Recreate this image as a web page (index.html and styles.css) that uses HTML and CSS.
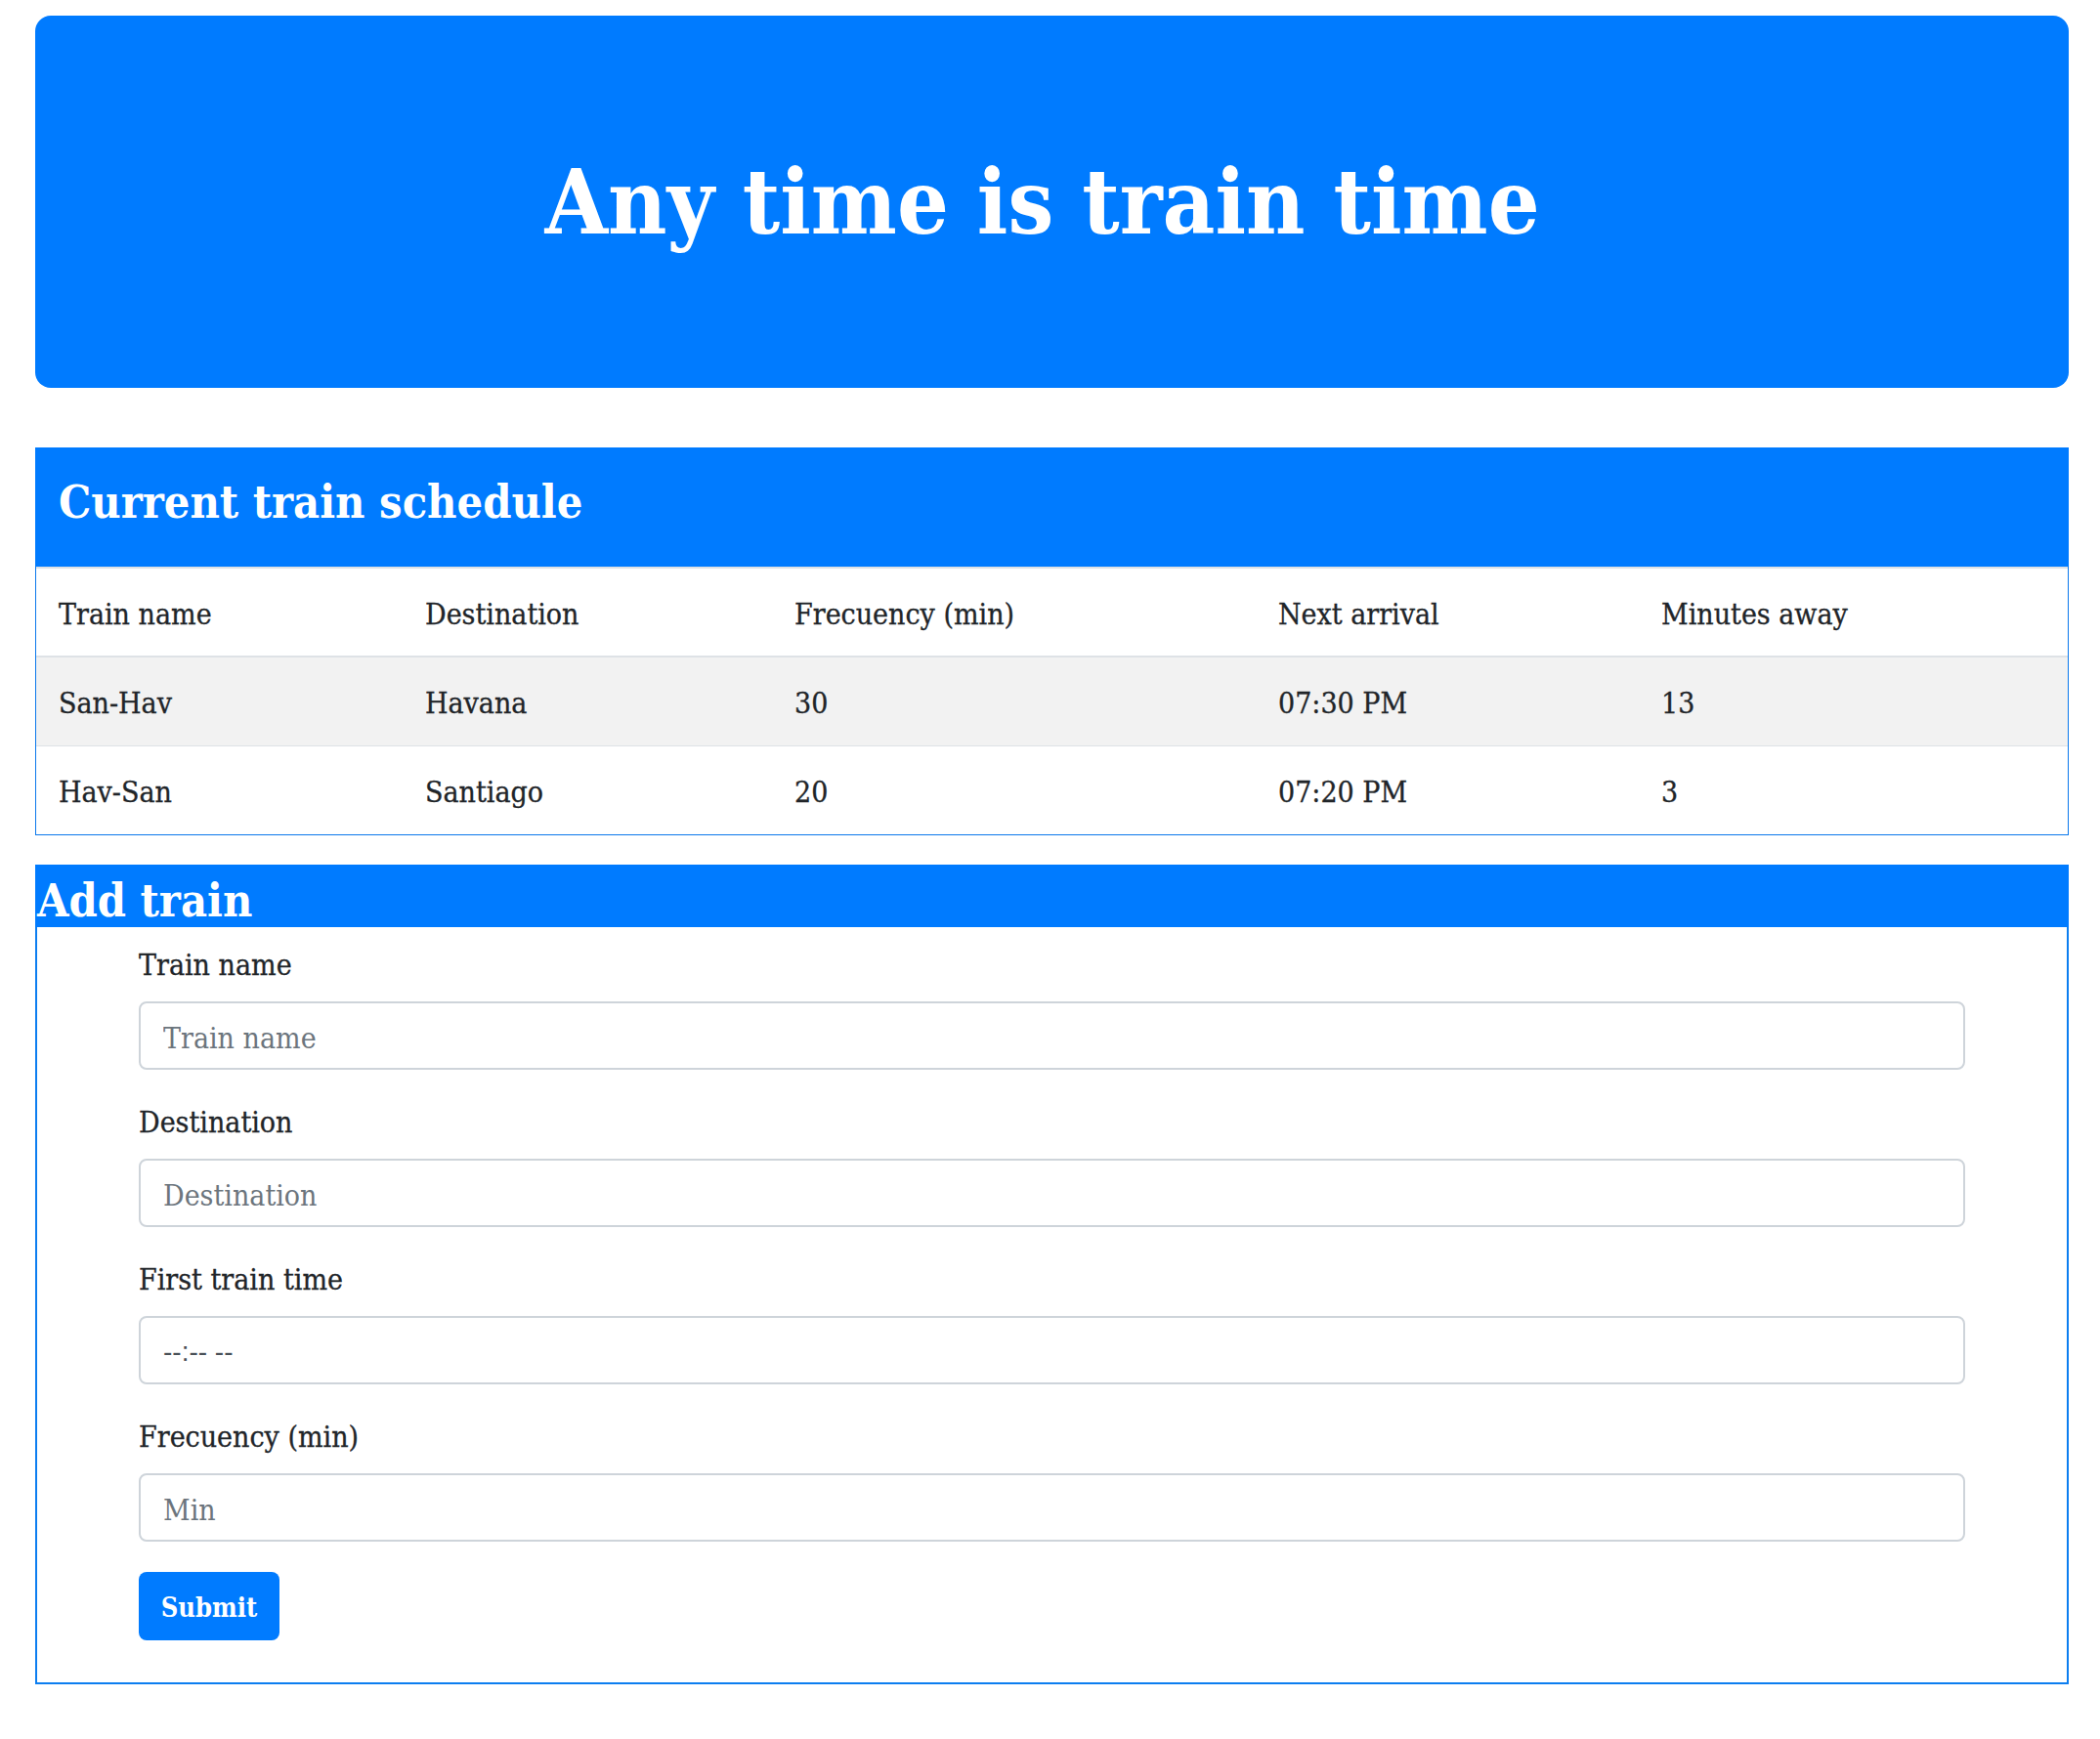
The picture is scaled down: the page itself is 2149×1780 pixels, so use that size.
FILE: index.html
```html
<!DOCTYPE html>
<html lang="en">
<head>
<meta charset="utf-8">
<title>Train Scheduler</title>
<link rel="stylesheet" href="styles.css">
</head>
<body>
<div class="page">
  <header class="jumbotron">
    <h1 class="title">Any time is train time</h1>
  </header>

  <section class="schedule">
    <h3 class="schedule-head">Current train schedule</h3>
    <table class="trains">
      <colgroup>
        <col class="c1"><col class="c2"><col class="c3"><col class="c4"><col class="c5">
      </colgroup>
      <thead>
        <tr><th>Train name</th><th>Destination</th><th>Frecuency (min)</th><th>Next arrival</th><th>Minutes away</th></tr>
      </thead>
      <tbody>
        <tr class="odd"><td>San-Hav</td><td>Havana</td><td>30</td><td>07:30 PM</td><td>13</td></tr>
        <tr><td>Hav-San</td><td>Santiago</td><td>20</td><td>07:20 PM</td><td>3</td></tr>
      </tbody>
    </table>
  </section>

  <section class="add">
    <h3 class="add-head">Add train</h3>
    <form class="add-form">
      <div class="group">
        <label class="lbl" for="name">Train name</label>
        <input class="field" id="name" type="text" placeholder="Train name">
      </div>
      <div class="group">
        <label class="lbl" for="dest">Destination</label>
        <input class="field" id="dest" type="text" placeholder="Destination">
      </div>
      <div class="group">
        <label class="lbl" for="first">First train time</label>
        <input class="field field-time" id="first" type="text" placeholder="--:-- --">
      </div>
      <div class="group">
        <label class="lbl" for="freq">Frecuency (min)</label>
        <input class="field" id="freq" type="text" placeholder="Min">
      </div>
      <button class="submit" type="button">Submit</button>
    </form>
  </section>
</div>
</body>
</html>
```

FILE: styles.css
```css
* { box-sizing: border-box; }

html, body {
  margin: 0;
  padding: 0;
  background: #ffffff;
}

body {
  font-family: "DejaVu Serif Condensed", "DejaVu Serif", serif;
  font-size: 30px;
  color: #212529;
}

.page {
  padding: 16px 32px 0 36px;
}

.jumbotron {
  height: 381px;
  background: #007bff;
  border-radius: 16px;
  display: flex;
  align-items: center;
  justify-content: center;
  padding-right: 20px;
  margin: 0 0 61px;
}

.title {
  margin: 0;
  font-size: 92.5px;
  line-height: 1.2;
  font-weight: bold;
  color: #ffffff;
}

.schedule {
  border: 1px solid #0a78ec;
  border-top: none;
  margin-bottom: 30px;
}

.schedule-head {
  margin: 0 -1px;
  background: #007bff;
  color: #ffffff;
  font-size: 46.5px;
  font-weight: bold;
  line-height: 56px;
  padding: 28px 24px 38px;
}

.trains {
  width: 100%;
  border-collapse: collapse;
  table-layout: fixed;
}

.c1 { width: 375px; }
.c2 { width: 378px; }
.c3 { width: 495px; }
.c4 { width: 392px; }
.c5 { width: auto; }

.trains th,
.trains td {
  text-align: left;
  font-weight: normal;
  line-height: 48px;
  padding: 23px 23px 19px;
  border-top: 1px solid #dee2e6;
  white-space: nowrap;
  -webkit-text-stroke: 0.3px #212529;
}

.trains th {
  padding: 23px 23px 18px;
  border-top: 2px solid #dee2e6;
  border-bottom: 2px solid #dee2e6;
}

.trains .odd td {
  background: #f2f2f2;
  border-top: none;
}

.add-head {
  margin: 0;
  height: 64px;
  background: #007bff;
  color: #ffffff;
  font-size: 46.5px;
  font-weight: bold;
  line-height: 54px;
  padding: 10px 2px 0;
}

.add-form {
  border: 2px solid #0c7ef0;
  border-top: none;
  padding: 16px 104px 43px 104px;
}

.group {
  display: flex;
  flex-direction: column;
  margin-bottom: 31px;
}

.lbl {
  display: block;
  line-height: 46px;
  margin-bottom: 14px;
  -webkit-text-stroke: 0.3px #212529;
}

.field {
  display: block;
  width: 100%;
  height: 70px;
  border: 2px solid #ced4da;
  border-radius: 8px;
  padding: 4px 23px 0;
  font-family: inherit;
  font-size: 30px;
  color: #495057;
  background: #ffffff;
  outline: none;
}

.field::placeholder {
  color: #6c757d;
  opacity: 1;
}

.field-time {
  font-family: "Liberation Sans", Arial, sans-serif;
  font-size: 28px;
}

.field-time::placeholder {
  color: #495057;
}

.submit {
  display: block;
  width: 144px;
  height: 70px;
  border: none;
  border-radius: 8px;
  background: #007bff;
  color: #ffffff;
  font-family: inherit;
  font-size: 27px;
  font-weight: bold;
  padding: 2px 0 0;
  cursor: pointer;
}
```
